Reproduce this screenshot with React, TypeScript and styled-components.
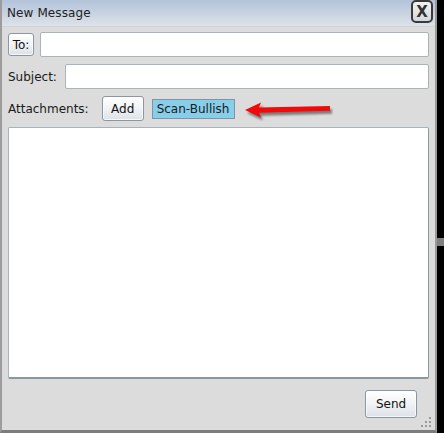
import React from "react";
import styled, { createGlobalStyle } from "styled-components";

const Global = createGlobalStyle`
  html, body { margin: 0; padding: 0; background: #000; }
  body { font-family: "DejaVu Sans", Verdana, sans-serif; font-size: 12px; color: #1a1a1a; }
  * { box-sizing: border-box; }
`;

const Screen = styled.div`
  display: flex;
  width: 444px;
  height: 433px;
  background: #000;
`;

const Window = styled.div`
  position: relative;
  width: 437px;
  height: 433px;
  display: flex;
  flex-direction: column;
  background: #dcdcdc;
  border-left: 2px solid #9c9c9c;
  border-right: 2px solid #9a9a9a;
  border-bottom: 3px solid #7c7c7c;
`;

const TitleBar = styled.div`
  height: 27px;
  flex: none;
  display: flex;
  align-items: center;
  justify-content: space-between;
  padding: 0 2px 1px 5px;
  background: linear-gradient(#b2c3da, #dde2e8);
  border-bottom: 1px solid #d0d4d8;
`;

const Title = styled.span`
  font-size: 12px;
  color: #222;
  letter-spacing: 0.1px;
`;

const CloseButton = styled.button`
  width: 22px;
  height: 23px;
  margin-top: -2px;
  padding: 0;
  border: 2px solid #3a3a3a;
  border-radius: 5px;
  background: linear-gradient(#f2f2f2, #d4d8dc);
  font-family: "DejaVu Sans", sans-serif;
  font-weight: bold;
  font-size: 15px;
  color: #333;
  display: flex;
  align-items: center;
  justify-content: center;
`;

const Body = styled.div`
  flex: 1;
  display: flex;
  flex-direction: column;
  padding: 5px 6px 0 6px;
`;

const Row = styled.div<{ $gap?: number; $mb: number }>`
  height: 25px;
  flex: none;
  display: flex;
  align-items: center;
  gap: ${(p) => p.$gap ?? 6}px;
  margin-bottom: ${(p) => p.$mb}px;
`;

const Label = styled.span`
  font-size: 12px;
  color: #1a1a1a;
  white-space: nowrap;
`;

const Button = styled.button<{ $w: number; $h: number }>`
  width: ${(p) => p.$w}px;
  height: ${(p) => p.$h}px;
  flex: none;
  padding: 0;
  font-family: "DejaVu Sans", sans-serif;
  font-size: 12px;
  color: #111;
  border: 1px solid #8a97a3;
  border-radius: 3px;
  background: linear-gradient(#ffffff, #f2f4f6 45%, #dde2e7);
  box-shadow: inset 0 0 0 1px rgba(255, 255, 255, 0.7);
`;

const TextInput = styled.input`
  flex: 1;
  height: 25px;
  min-width: 0;
  border: 1px solid #a9b3bc;
  border-radius: 2px;
  background: #fff;
  outline: none;
`;

const Chip = styled.span`
  height: 20px;
  display: flex;
  align-items: center;
  padding: 0 5px 0 4px;
  background: #87ceeb;
  border: 1px solid #8394a0;
  font-size: 12px;
  color: #1a1a1a;
`;

const ArrowSvg = styled.svg`
  flex: none;
  margin-left: 10px;
`;

const MessageArea = styled.textarea`
  height: 252px;
  flex: none;
  resize: none;
  border: 1px solid #a7b2ba;
  border-right-color: #8d9aa3;
  border-bottom: 2px solid #8a979f;
  border-radius: 2px;
  background: #fff;
  outline: none;
`;

const Footer = styled.div`
  flex: 1;
  display: flex;
  justify-content: flex-end;
  align-items: flex-start;
  padding: 11px 12px 0 0;
`;

const Grip = styled.svg`
  position: absolute;
  right: 2px;
  bottom: 1px;
`;

const SideStrip = styled.div`
  flex: 1;
  display: flex;
  flex-direction: column;
  padding-top: 238px;
`;

const ScrollMark = styled.div`
  height: 8px;
  background: #808080;
`;

const ARROW = "0,14 16,6.5 14,11.5 85,10 85,14.8 14,16.8 16,21.5";

function Arrow() {
  return (
    <ArrowSvg width="90" height="25" viewBox="0 0 90 25">
      <defs>
        <filter id="blur" x="-20%" y="-50%" width="140%" height="200%">
          <feGaussianBlur stdDeviation="1.2" />
        </filter>
      </defs>
      <g transform="translate(2,3)" fill="#5a5a5a" opacity="0.75" filter="url(#blur)">
        <polygon points={ARROW} />
      </g>
      <polygon points={ARROW} fill="#f00a0a" />
    </ArrowSvg>
  );
}

export default function App() {
  return (
    <>
      <Global />
      <Screen>
        <Window>
          <TitleBar>
            <Title>New Message</Title>
            <CloseButton>X</CloseButton>
          </TitleBar>
          <Body>
            <Row $mb={7}>
              <Button $w={26} $h={23}>To:</Button>
              <TextInput />
            </Row>
            <Row $mb={7} $gap={8}>
              <Label>Subject:</Label>
              <TextInput />
            </Row>
            <Row $mb={6} $gap={0}>
              <Label>Attachments:</Label>
              <Button $w={42} $h={25} style={{ marginLeft: 13 }}>Add</Button>
              <Chip style={{ marginLeft: 8 }}>Scan-Bullish</Chip>
              <Arrow />
            </Row>
            <MessageArea />
            <Footer>
              <Button $w={52} $h={28}>Send</Button>
            </Footer>
          </Body>
          <Grip width="12" height="14" viewBox="0 0 12 14">
            <g fill="#9a9a9a">
              <rect x="8" y="2" width="2" height="2" />
              <rect x="4" y="6" width="2" height="2" />
              <rect x="8" y="6" width="2" height="2" />
              <rect x="0" y="10" width="2" height="2" />
              <rect x="4" y="10" width="2" height="2" />
              <rect x="8" y="10" width="2" height="2" />
            </g>
          </Grip>
        </Window>
        <SideStrip>
          <ScrollMark />
        </SideStrip>
      </Screen>
    </>
  );
}
